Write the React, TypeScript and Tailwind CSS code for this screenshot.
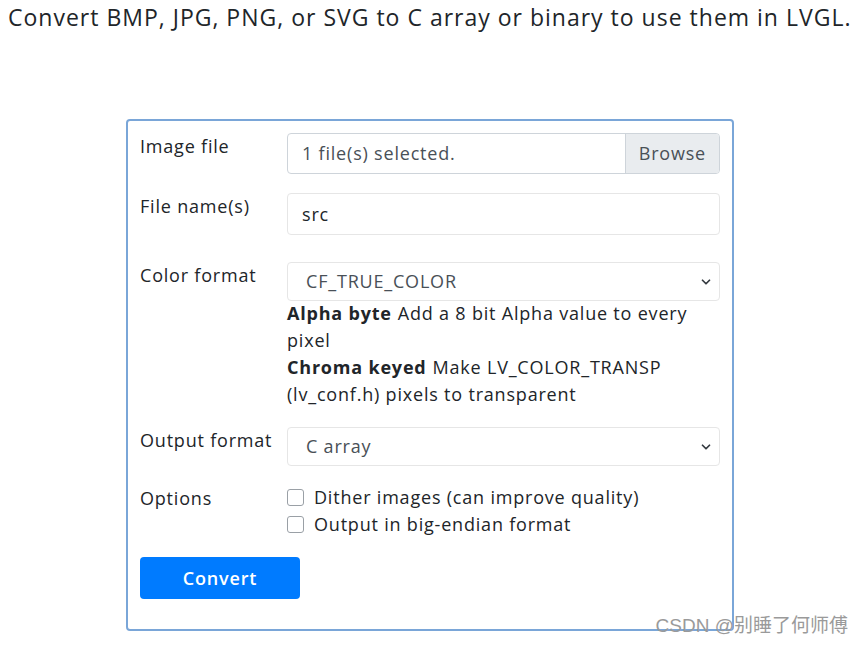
import { ChevronDown } from 'lucide-react';

const font = { fontFamily: '"Open Sans", "Noto Sans CJK SC", sans-serif' };

const Row = ({ label, children, className = '' }: { label: string; children: React.ReactNode; className?: string }) => (
  <div className={`flex ${className}`}>
    <div className="w-[147px] shrink-0 text-[18px] leading-[27px] tracking-[0.8px] text-[#212529]">{label}</div>
    <div className="flex-1">{children}</div>
  </div>
);

const Select = ({ value }: { value: string }) => (
  <div className="flex h-[39px] items-center justify-between rounded-[4px] border border-[#e6e6e6] pl-[18px] pr-[6px] text-[18px] tracking-[0.8px] text-[#495057]">
    <span>{value}</span>
    <ChevronDown className="h-[14px] w-[14px] text-[#343a40]" strokeWidth={3} />
  </div>
);

export default function App() {
  return (
    <div className="relative h-[646px] w-[864px] overflow-hidden bg-white" style={font}>
      <h1 className="pl-[8px] pt-[1px] text-[23px] leading-[32px] tracking-[1px] text-[#212529]">
        Convert BMP, JPG, PNG, or SVG to C array or binary to use them in LVGL.
      </h1>

      <div className="ml-[126px] mt-[86px] h-[512px] w-[608px] rounded-[4px] border-2 border-[#7aa6d8] px-[12px] pt-[12px]">
        <Row label="Image file">
          <div className="flex h-[41px] overflow-hidden rounded-[4px] border border-[#ced4da] text-[18px] tracking-[0.8px] text-[#495057]">
            <div className="flex flex-1 items-center pl-[14px]">1 file(s) selected.</div>
            <div className="flex items-center border-l border-[#ced4da] bg-[#e9ecef] px-[13px]">Browse</div>
          </div>
        </Row>

        <Row label="File name(s)" className="mt-[19px]">
          <div className="flex h-[42px] items-center rounded-[4px] border border-[#e6e6e6] pl-[14px] text-[18px] tracking-[0.8px] text-[#212529]">
            src
          </div>
        </Row>

        <Row label="Color format" className="mt-[27px]">
          <Select value="CF_TRUE_COLOR" />
          <div className="-mt-[1px] text-[18px] leading-[27px] tracking-[0.8px] text-[#212529]">
            <p>
              <b className="mr-[6px]">Alpha byte</b>Add a 8 bit Alpha value to every pixel
            </p>
            <p>
              <b className="mr-[6px]">Chroma keyed</b>Make LV_COLOR_TRANSP (lv_conf.h) pixels to transparent
            </p>
          </div>
        </Row>

        <Row label="Output format" className="mt-[19px]">
          <Select value="C array" />
        </Row>

        <Row label="Options" className="mt-[19px]">
          <div className="-mt-[1px] text-[18px] leading-[27px] tracking-[0.8px] text-[#212529]">
            {['Dither images (can improve quality)', 'Output in big-endian format'].map((t) => (
              <label key={t} className="flex items-center gap-[10px]">
                <span className="h-[17px] w-[17px] shrink-0 rounded-[3px] border border-[#9aa0a6] bg-white" />
                {t}
              </label>
            ))}
          </div>
        </Row>

        <button className="mt-[19px] h-[42px] w-[160px] rounded-[4px] bg-[#007bff] text-[18px] font-semibold tracking-[0.8px] text-white">
          Convert
        </button>
      </div>

      <div className="absolute right-[16px] top-[612px] text-[19px] text-[#9a9a9a]" style={{ fontFamily: '"Liberation Sans", "Noto Sans CJK SC", sans-serif' }}>
        CSDN @别睡了何师傅
      </div>
    </div>
  );
}
